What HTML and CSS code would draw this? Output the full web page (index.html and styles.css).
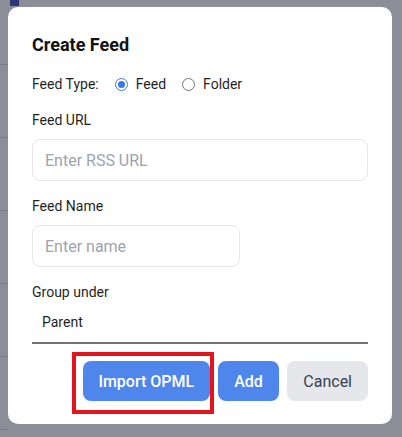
FILE: index.html
```html
<!DOCTYPE html>
<html>
<head>
<meta charset="utf-8">
<link rel="stylesheet" href="styles.css">
</head>
<body>
<div class="modal">
  <h2 class="title">Create Feed</h2>
  <div class="type-row">
    <span class="type-label">Feed Type:</span>
    <label class="radio"><span class="dot checked"></span>Feed</label>
    <label class="radio"><span class="dot"></span>Folder</label>
  </div>
  <div class="field">
    <div class="label">Feed URL</div>
    <div class="input wide">Enter RSS URL</div>
  </div>
  <div class="field">
    <div class="label">Feed Name</div>
    <div class="input narrow">Enter name</div>
  </div>
  <div class="field">
    <div class="label">Group under</div>
    <div class="select">Parent</div>
  </div>
  <div class="actions">
    <button class="btn primary highlight">Import OPML</button>
    <button class="btn primary btn-add">Add</button>
    <button class="btn secondary">Cancel</button>
  </div>
</div>
</body>
</html>
```
FILE: styles.css
```css
html, body {
  margin: 0;
  height: 100%;
}
body {
  padding: 7px 0 0 8px;
  box-sizing: border-box;
  font-family: Roboto, "Liberation Sans", sans-serif;
  background-color: #8b8e96;
  background-image:
    linear-gradient(#2c3577, #2c3577),
    repeating-linear-gradient(to bottom, transparent 0 64px, #7c7f87 64px 65px, transparent 65px 73px);
  background-repeat: no-repeat, repeat-y;
  background-size: 9px 6px, 8px 100%;
  background-position: 10px 0, 0 0;
  overflow: hidden;
}
.modal {
  width: 384px;
  height: 417px;
  box-sizing: border-box;
  background: #fff;
  border-radius: 10px;
  padding: 24px 24px 23px 24px;
  display: flex;
  flex-direction: column;
}
.title {
  margin: 0;
  font-size: 18px;
  font-weight: 700;
  line-height: 28px;
  color: #111;
}
.type-row {
  margin-top: 13px;
  height: 24px;
  display: flex;
  align-items: center;
  font-size: 14px;
  color: #1f1f1f;
}
.type-label {
  margin-right: 16px;
}
.radio {
  display: flex;
  align-items: center;
  margin-right: 16px;
}
.dot {
  width: 13px;
  height: 13px;
  box-sizing: border-box;
  border: 1px solid #767676;
  border-radius: 50%;
  margin-right: 8px;
  position: relative;
}
.dot.checked {
  border: 1.5px solid #3b78e7;
}
.dot.checked::after {
  content: "";
  position: absolute;
  inset: 2px;
  border-radius: 50%;
  background: #3b78e7;
}
.field {
  margin-top: 14px;
}
.field + .field {
  margin-top: 15px;
}
.label {
  font-size: 14px;
  line-height: 20px;
  color: #1f1f1f;
  margin-bottom: 9px;
}
.input {
  height: 42px;
  box-sizing: border-box;
  border: 1px solid #e5e7eb;
  border-radius: 8px;
  padding: 0 12px;
  display: flex;
  align-items: center;
  font-size: 16px;
  color: #9ca3af;
}
.input.narrow {
  width: 208px;
}
.label + .select {
  margin-top: -9px;
}
.select {
  height: 42px;
  box-sizing: border-box;
  border-bottom: 2px solid #757575;
  padding: 0 10px;
  display: flex;
  align-items: center;
  font-size: 14px;
  color: #1f1f1f;
}
.actions {
  margin-top: 17px;
  display: flex;
  justify-content: flex-end;
  gap: 8px;
}
.btn {
  height: 40px;
  border: none;
  border-radius: 8px;
  padding: 0 15.5px;
  font-family: Roboto, "Liberation Sans", sans-serif;
  font-size: 16px;
  font-weight: 500;
}
.primary {
  background: #4f86ec;
  color: #fff;
}
.btn-add {
  padding: 0 16.5px;
}
.secondary {
  background: #e5e7eb;
  color: #374151;
  font-weight: 400;
  padding: 0 16px;
}
.highlight {
  position: relative;
}
.highlight::after {
  content: "";
  position: absolute;
  top: -9px;
  left: -11px;
  right: -4px;
  bottom: -13px;
  border: 4px solid #e2151c;
  pointer-events: none;
}
```
